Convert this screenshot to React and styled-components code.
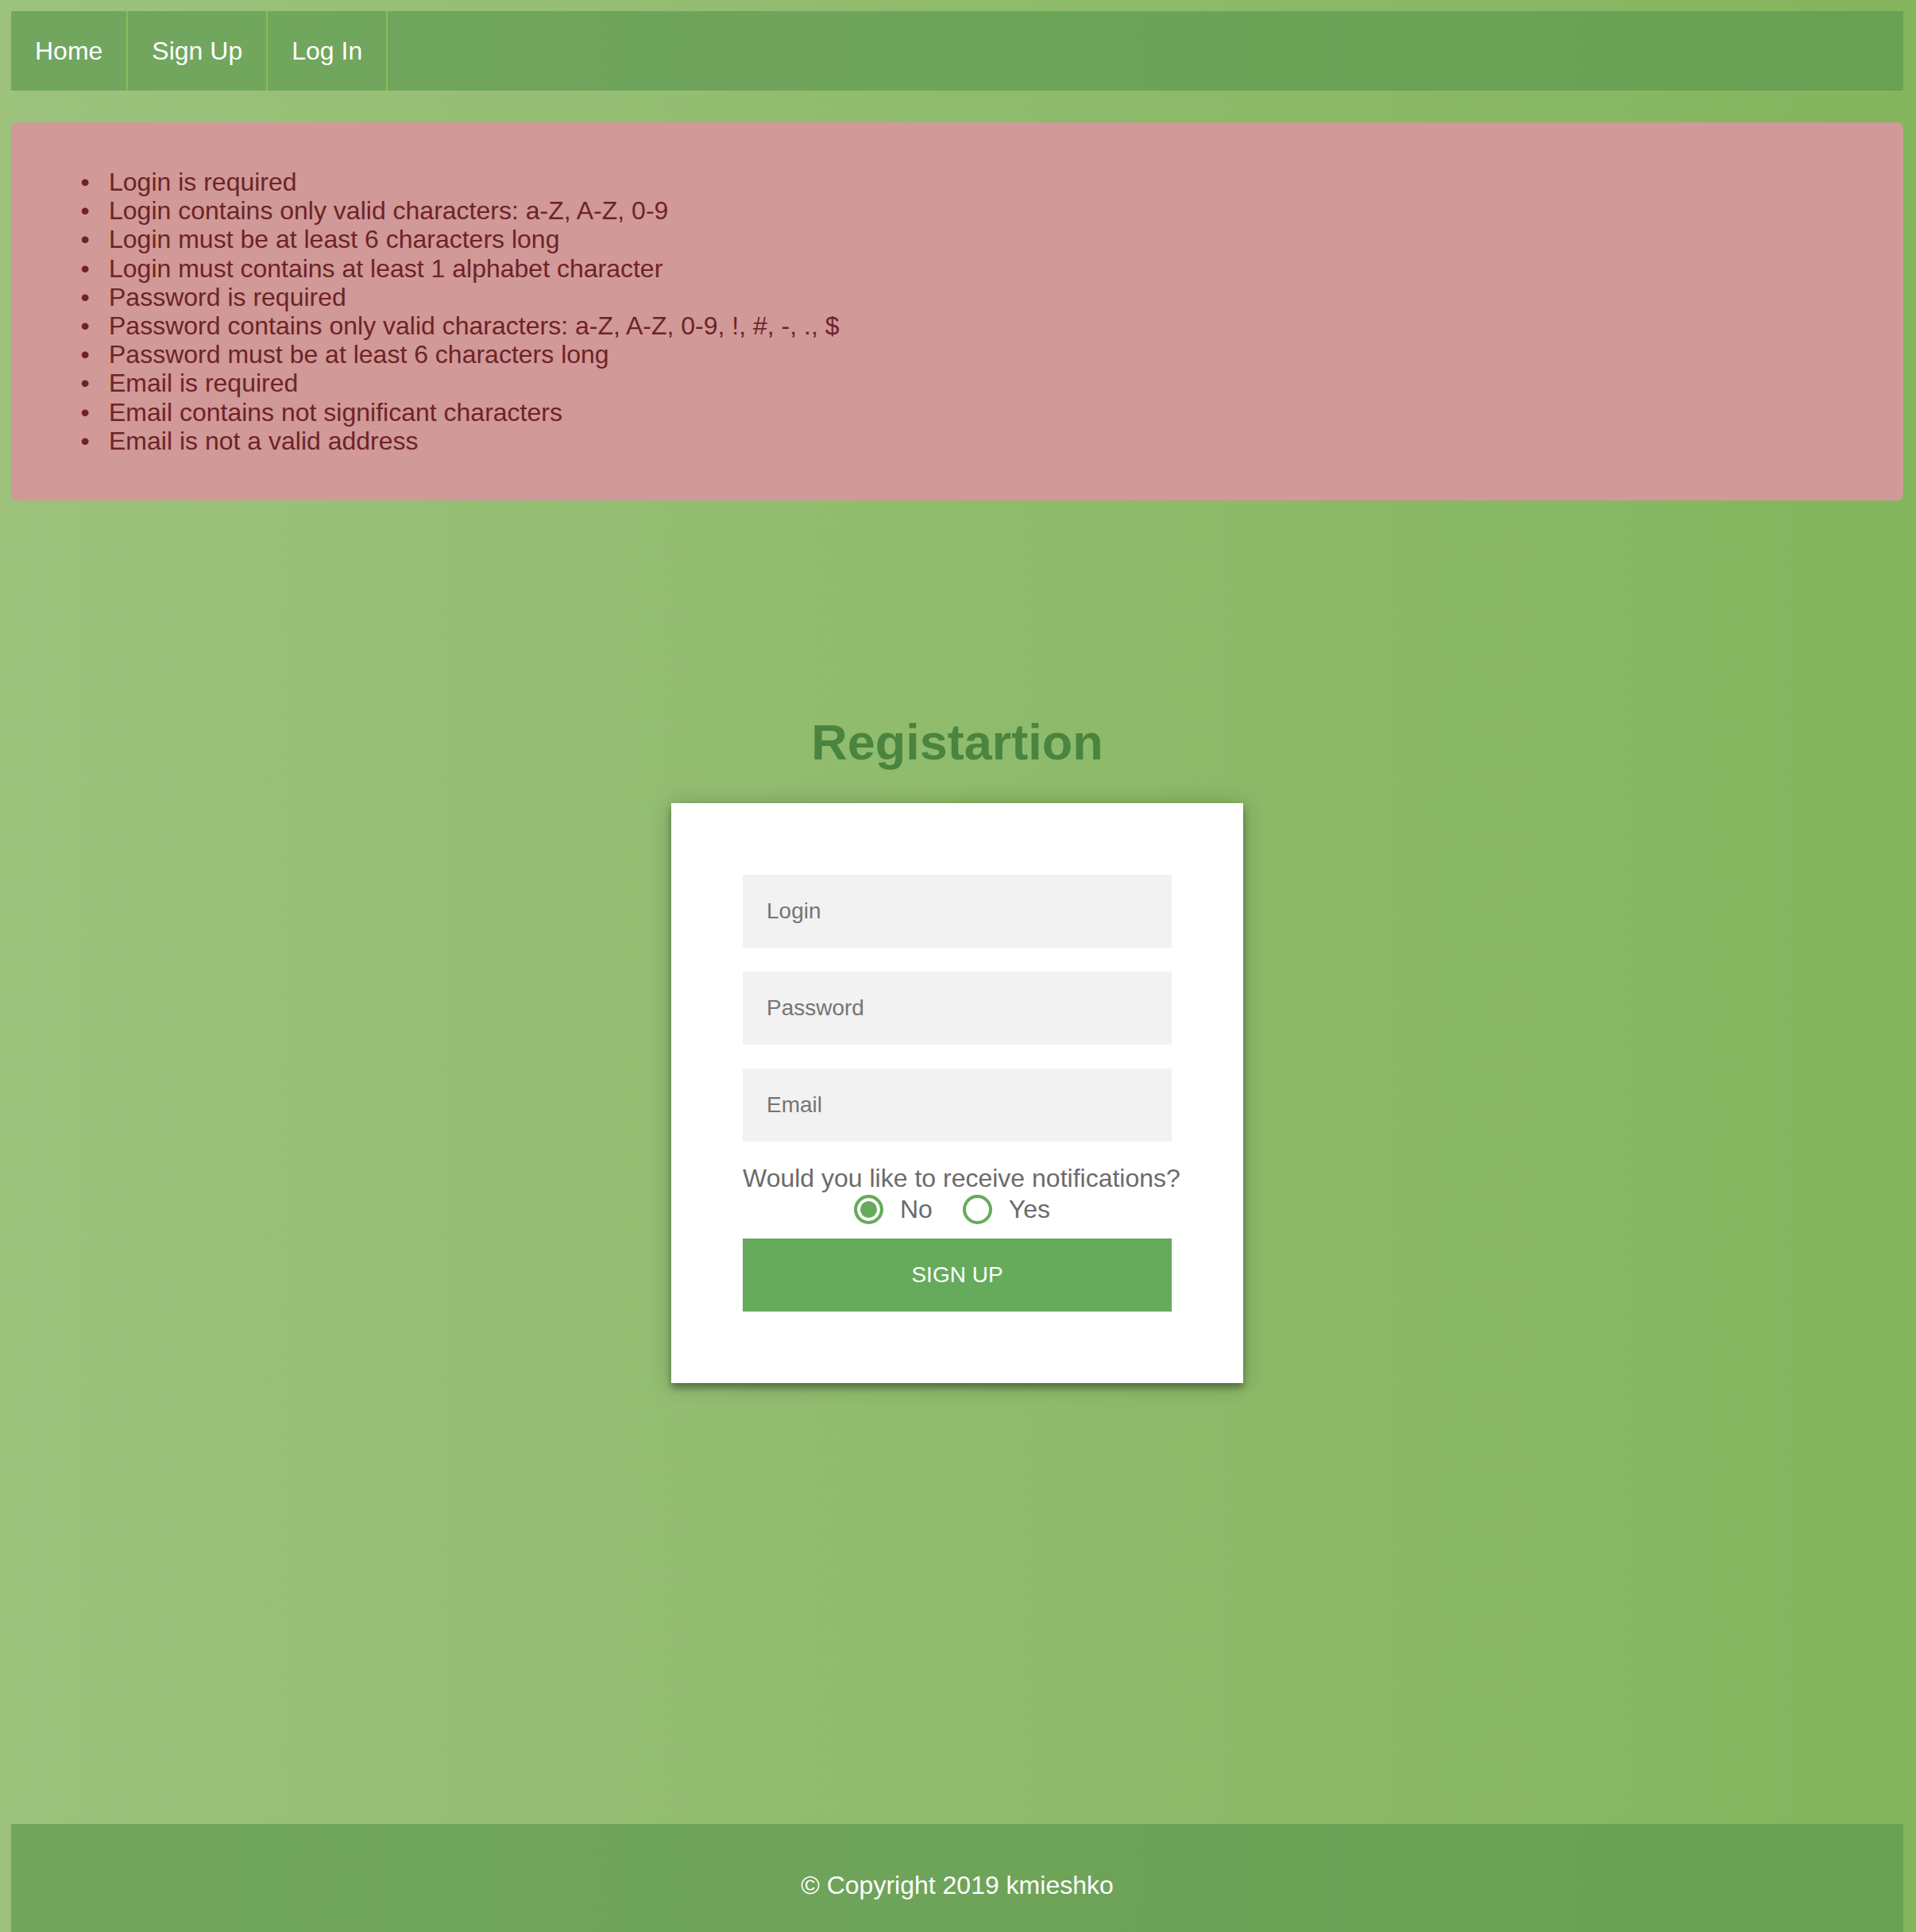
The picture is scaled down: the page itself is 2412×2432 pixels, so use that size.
import React, { useState } from 'react';
import styled, { createGlobalStyle } from 'styled-components';

const GlobalStyle = createGlobalStyle`
  html, body {
    margin: 0;
    padding: 0;
  }
  body {
    font-family: "Liberation Sans", Arial, Helvetica, sans-serif;
    background: linear-gradient(to right, #9cc27c, #83b55d);
    min-height: 100vh;
  }
  * {
    box-sizing: border-box;
  }
`;

const Page = styled.div`
  min-height: 100vh;
  padding: 14px 16px 0 14px;
  display: flex;
  flex-direction: column;
`;

const NavBar = styled.nav`
  height: 100px;
  display: flex;
  background: rgba(89, 148, 77, 0.61);
`;

const NavLink = styled.a`
  display: block;
  padding: 0 30px;
  line-height: 100px;
  font-size: 32px;
  color: #ffffff;
  text-decoration: none;
  border-right: 2px solid #8cbb58;
  cursor: pointer;
`;

const ErrorBox = styled.div`
  margin-top: 40px;
  padding: 26px;
  background: #d19998;
  border-radius: 8px;
  color: #6e2327;
  font-size: 32px;
  line-height: 36.2px;
`;

const ErrorList = styled.ul`
  margin: 31px 0;
  padding-left: 97px;

  li::marker {
    content: "\\2022\\00a0\\00a0\\2009";
  }
`;

const Main = styled.main`
  flex: 1;
  padding-top: 268px;
  display: flex;
  flex-direction: column;
  align-items: center;
`;

const Title = styled.h1`
  margin: 0 0 41px;
  font-size: 63px;
  font-weight: bold;
  color: #4a843e;
`;

const Card = styled.form`
  width: 720px;
  padding: 90px;
  background: #ffffff;
  box-shadow: 0 6px 8px rgba(0, 0, 0, 0.32), 0 2px 26px rgba(0, 0, 0, 0.22);
  display: flex;
  flex-direction: column;
`;

const Field = styled.input`
  height: 92px;
  width: 100%;
  margin-bottom: ${({ last }) => (last ? '0' : '30px')};
  padding: 0 30px;
  border: none;
  outline: none;
  background: #f2f2f2;
  font-family: inherit;
  font-size: 28px;
  color: #333;

  &::placeholder {
    color: #757575;
  }
`;

const Question = styled.div`
  margin-top: 28px;
  font-size: 32px;
  color: #6b6b6b;
  text-align: center;
  white-space: nowrap;
`;

const RadioRow = styled.div`
  margin-top: 2px;
  padding-right: 13px;
  display: flex;
  justify-content: center;
  gap: 38px;
`;

const RadioOption = styled.label`
  display: inline-flex;
  align-items: center;
  gap: 21px;
  font-size: 32px;
  color: #6b6b6b;
  cursor: pointer;
`;

const RadioInput = styled.input`
  appearance: none;
  margin: 0;
  width: 37px;
  height: 37px;
  border: 4px solid #66ab5a;
  border-radius: 50%;
  background: #ffffff;
  cursor: pointer;

  &:checked {
    background: #66ab5a;
    box-shadow: inset 0 0 0 4px #ffffff;
  }
`;

const SubmitButton = styled.button`
  margin-top: 18px;
  height: 92px;
  width: 100%;
  border: none;
  background: #66ab5b;
  color: #ffffff;
  font-family: inherit;
  font-size: 28px;
  text-transform: uppercase;
  cursor: pointer;
`;

const Footer = styled.footer`
  height: 136px;
  padding-top: 59px;
  background: rgba(89, 148, 77, 0.61);
  color: #ffffff;
  font-size: 32px;
  text-align: center;
`;

const errors = [
  'Login is required',
  'Login contains only valid characters: a-Z, A-Z, 0-9',
  'Login must be at least 6 characters long',
  'Login must contains at least 1 alphabet character',
  'Password is required',
  'Password contains only valid characters: a-Z, A-Z, 0-9, !, #, -, ., $',
  'Password must be at least 6 characters long',
  'Email is required',
  'Email contains not significant characters',
  'Email is not a valid address',
];

const App = () => {
  const [notify, setNotify] = useState('no');

  return (
    <>
      <GlobalStyle />
      <Page>
        <NavBar>
          <NavLink>Home</NavLink>
          <NavLink>Sign Up</NavLink>
          <NavLink>Log In</NavLink>
        </NavBar>

        <ErrorBox>
          <ErrorList>
            {errors.map((e) => (
              <li key={e}>{e}</li>
            ))}
          </ErrorList>
        </ErrorBox>

        <Main>
          <Title>Registartion</Title>
          <Card onSubmit={(e) => e.preventDefault()}>
            <Field type="text" placeholder="Login" />
            <Field type="password" placeholder="Password" />
            <Field type="email" placeholder="Email" last />
            <Question>Would you like to receive notifications?</Question>
            <RadioRow>
              <RadioOption>
                <RadioInput
                  type="radio"
                  name="notify"
                  checked={notify === 'no'}
                  onChange={() => setNotify('no')}
                />
                No
              </RadioOption>
              <RadioOption>
                <RadioInput
                  type="radio"
                  name="notify"
                  checked={notify === 'yes'}
                  onChange={() => setNotify('yes')}
                />
                Yes
              </RadioOption>
            </RadioRow>
            <SubmitButton type="submit">Sign Up</SubmitButton>
          </Card>
        </Main>

        <Footer>© Copyright 2019 kmieshko</Footer>
      </Page>
    </>
  );
};

export default App;
